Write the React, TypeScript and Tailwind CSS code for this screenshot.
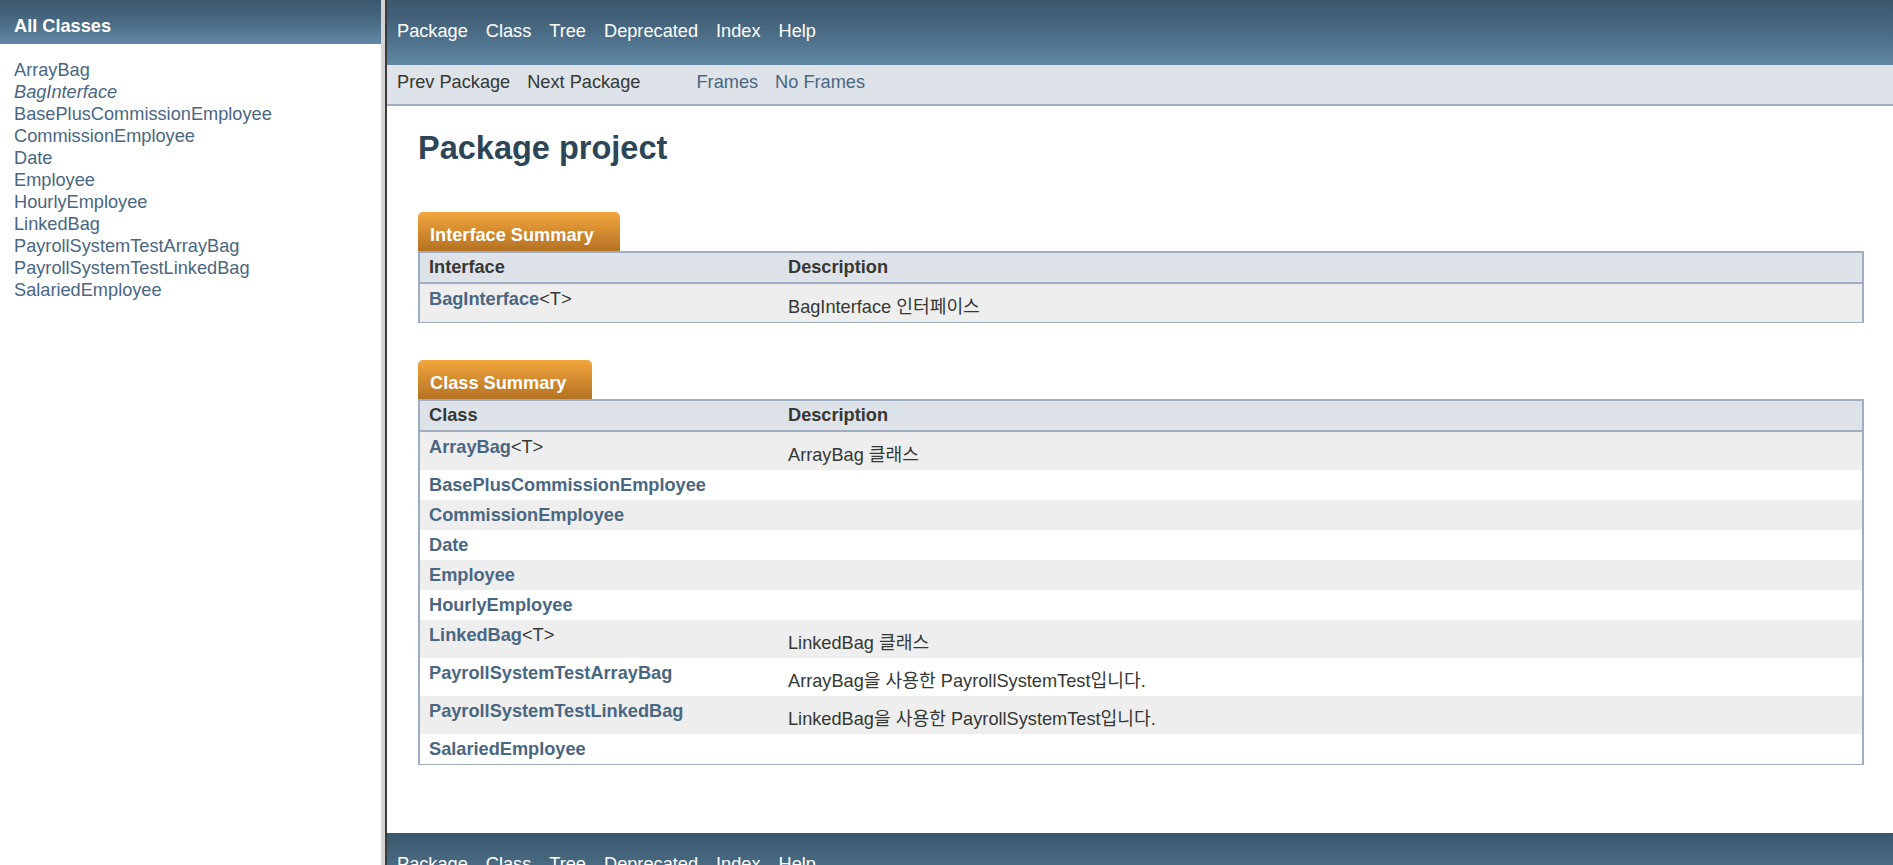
import React from "react";

type Row = { name: string; generic?: boolean; desc?: string };

const allClasses = [
  "ArrayBag",
  "BagInterface",
  "BasePlusCommissionEmployee",
  "CommissionEmployee",
  "Date",
  "Employee",
  "HourlyEmployee",
  "LinkedBag",
  "PayrollSystemTestArrayBag",
  "PayrollSystemTestLinkedBag",
  "SalariedEmployee",
];

const interfaces: Row[] = [{ name: "BagInterface", generic: true, desc: "BagInterface 인터페이스" }];

const classes: Row[] = [
  { name: "ArrayBag", generic: true, desc: "ArrayBag 클래스" },
  { name: "BasePlusCommissionEmployee" },
  { name: "CommissionEmployee" },
  { name: "Date" },
  { name: "Employee" },
  { name: "HourlyEmployee" },
  { name: "LinkedBag", generic: true, desc: "LinkedBag 클래스" },
  { name: "PayrollSystemTestArrayBag", desc: "ArrayBag을 사용한 PayrollSystemTest입니다." },
  { name: "PayrollSystemTestLinkedBag", desc: "LinkedBag을 사용한 PayrollSystemTest입니다." },
  { name: "SalariedEmployee" },
];

const navItems = ["Package", "Class", "Tree", "Deprecated", "Index", "Help"];

function TopNav() {
  return (
    <div className="h-[65px] shrink-0 bg-linear-to-b from-[#3a576c] via-[#4a6b84] to-[#6189a5] pl-[10px] pt-[21px]">
      <ul className="flex gap-[18px] text-[18.2px] leading-[20px] text-white">
        {navItems.map((n) => (
          <li key={n}>{n}</li>
        ))}
      </ul>
    </div>
  );
}

function SummaryTable({ title, colName, rows }: { title: string; colName: string; rows: Row[] }) {
  return (
    <div>
      <div className="flex">
        <div className="h-[39px] rounded-t-[5px] bg-linear-to-b from-[#f4a63e] to-[#b47222] pl-[12px] pr-[26px] pt-[13px] text-[18.2px] font-bold leading-[20px] text-white">
          {title}
        </div>
      </div>
      <div className="border-x-2 border-t-2 border-b border-[#9eadc0]">
        <div className="flex h-[31px] items-center border-b-2 border-[#9eadc0] bg-[#dee3e9] text-[18.2px] font-bold text-[#353833]">
          <div className="w-[358px] pl-[9px]">{colName}</div>
          <div className="pl-[10px]">Description</div>
        </div>
        {rows.map((r, i) => (
          <div
            key={r.name}
            className={`flex text-[18.2px] leading-[20px] ${r.desc ? "h-[38px]" : "h-[30px]"} ${
              i % 2 === 0 ? "bg-[#eeeeef]" : "bg-white"
            }`}
          >
            <div className="w-[358px] pl-[9px] pt-[5px]">
              <span className="font-bold text-[#4a6782]">{r.name}</span>
              {r.generic && <span className="text-[#353833]">&lt;T&gt;</span>}
            </div>
            {r.desc && <div className="pl-[10px] pt-[13px] text-[#353833]">{r.desc}</div>}
          </div>
        ))}
      </div>
    </div>
  );
}

export default function App() {
  return (
    <div className="flex h-[865px] w-[1893px] overflow-hidden bg-white font-['Liberation_Sans','Noto_Sans_CJK_KR',Arial,sans-serif]">
      <aside className="w-[381px] shrink-0">
        <h1 className="h-[44px] bg-linear-to-b from-[#3a576c] via-[#4a6b84] to-[#6189a5] pl-[14px] pt-[16px] text-[18.2px] font-bold leading-[20px] text-white">
          All Classes
        </h1>
        <ul className="pl-[14px] pt-[15px] text-[18.2px] leading-[22px] text-[#4a6782]">
          {allClasses.map((c) => (
            <li key={c} className={c === "BagInterface" ? "italic" : ""}>
              {c}
            </li>
          ))}
        </ul>
      </aside>

      <div className="w-[4px] shrink-0 bg-[#d4d4d4]" />
      <div className="w-[2px] shrink-0 bg-[#3b3b3b]" />

      <main className="flex min-w-0 flex-1 flex-col">
        <TopNav />
        <div className="flex h-[41px] shrink-0 border-b-2 border-[#9eadc0] bg-[#dee3e9] pl-[10px] pt-[7px] text-[18.2px] leading-[20px]">
          <ul className="flex gap-[17px] text-[#353833]">
            <li>Prev Package</li>
            <li>Next Package</li>
          </ul>
          <ul className="ml-[56px] flex gap-[17px] text-[#4a6782]">
            <li>Frames</li>
            <li>No Frames</li>
          </ul>
        </div>

        <div className="pl-[31px] pr-[29px]">
          <h1 className="mt-[23px] text-[32.5px] font-bold leading-[38px] text-[#2c4557]">Package project</h1>
          <div className="mt-[45px]">
            <SummaryTable title="Interface Summary" colName="Interface" rows={interfaces} />
          </div>
          <div className="mt-[37px]">
            <SummaryTable title="Class Summary" colName="Class" rows={classes} />
          </div>
        </div>

        <div className="mt-[68px]">
          <TopNav />
        </div>
      </main>
    </div>
  );
}
